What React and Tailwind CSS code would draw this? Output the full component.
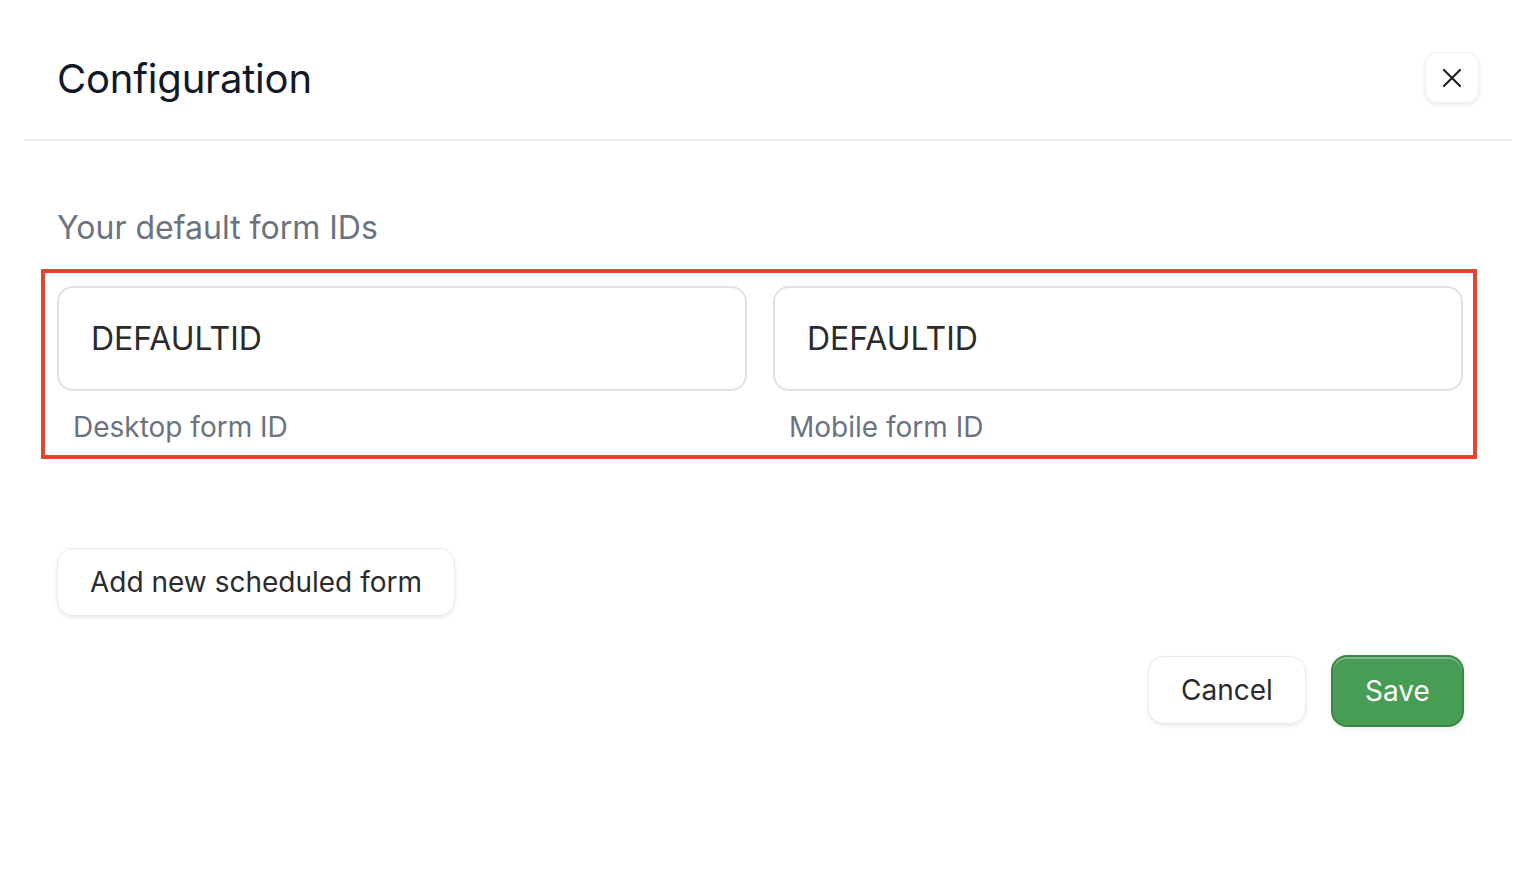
import React from "react";

function XIcon() {
  return (
    <svg width="24" height="24" viewBox="0 0 24 24" fill="none" stroke="#222" strokeWidth="2.2" strokeLinecap="round">
      <path d="M4 4L20 20M20 4L4 20" />
    </svg>
  );
}

export default function App() {
  return (
    <div className="w-[1530px] h-[876px] bg-white" style={{ fontFamily: "Inter, 'Noto Sans', sans-serif" }}>
      <div className="ml-[24px] w-[1488px]">
        <div className="h-[139px] flex items-center justify-between pl-[33px] pr-[33px] pt-[18px]">
          <h1 className="text-[40px] leading-none text-[#111827] tracking-[-0.2px]">Configuration</h1>
          <button className="w-[54px] h-[51px] -mt-[2px] rounded-[12px] border border-[#f0f0ee] bg-white shadow-[0_2px_4px_rgba(0,0,0,0.08)] flex items-center justify-center">
            <XIcon />
          </button>
        </div>
        <div className="h-[2px] bg-[#efeeea]" />
      </div>

      <div className="pt-[71px]">
        <p className="pl-[57px] text-[32px] leading-none text-[#6b7280]">Your default form IDs</p>

        <div className="mt-[25px] ml-[41px] w-[1436px] h-[190px] border-[4px] border-[#e8432b] pl-[12px] pr-[10px] pt-[13px]">
          <div className="flex gap-[26px]">
            <div className="w-[690px]">
              <div className="h-[105px] rounded-[16px] border-2 border-[#e2e1dd] flex items-center pl-[32px]">
                <span className="text-[32px] text-[#2b2b2b]">DEFAULTID</span>
              </div>
              <div className="pl-[16px] pt-[18px] text-[28px] leading-[36px] text-[#6b7280]">Desktop form ID</div>
            </div>
            <div className="w-[690px]">
              <div className="h-[105px] rounded-[16px] border-2 border-[#e2e1dd] flex items-center pl-[32px]">
                <span className="text-[32px] text-[#2b2b2b]">DEFAULTID</span>
              </div>
              <div className="pl-[16px] pt-[18px] text-[28px] leading-[36px] text-[#6b7280]">Mobile form ID</div>
            </div>
          </div>
        </div>

        <div className="pl-[57px] mt-[89px]">
          <button className="h-[68px] w-[398px] rounded-[16px] border border-[#ecebe8] bg-white shadow-[0_2px_4px_rgba(0,0,0,0.08)] text-[28px] text-[#2b2b2b]">
            Add new scheduled form
          </button>
        </div>

        <div className="flex justify-end gap-[25px] pr-[66px] mt-[40px]">
          <button className="h-[68px] w-[158px] rounded-[16px] border border-[#ecebe8] bg-white shadow-[0_2px_4px_rgba(0,0,0,0.08)] text-[28px] text-[#2b2b2b]">
            Cancel
          </button>
          <button className="h-[72px] w-[133px] rounded-[16px] border-2 border-[#3a8745] bg-[#469d53] shadow-[inset_0_2px_0_rgba(255,255,255,0.3),0_2px_6px_rgba(0,0,0,0.08)] text-[28px] text-white -mt-[1px]">
            Save
          </button>
        </div>
      </div>
    </div>
  );
}
